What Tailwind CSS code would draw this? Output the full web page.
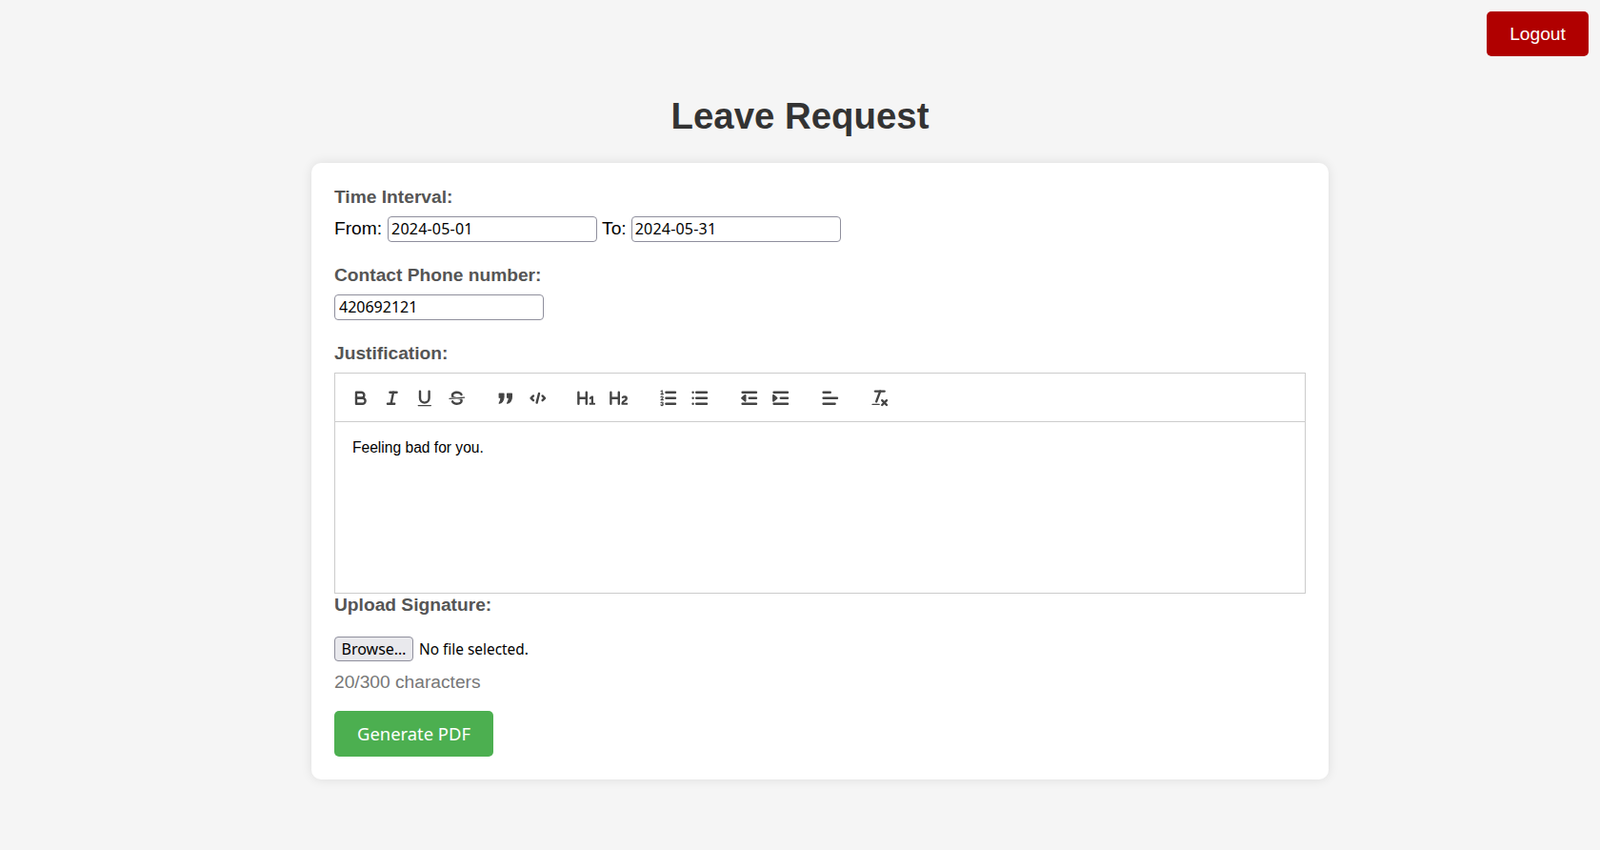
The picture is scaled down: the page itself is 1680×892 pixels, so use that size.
<!DOCTYPE html>
<html lang="en">
<head>
  <meta charset="UTF-8" />
  <title>Leave Request</title>
  <meta name="viewport" content="width=device-width, initial-scale=1.0"/>
  <script src="https://cdn.jsdelivr.net/npm/@tailwindcss/browser@4"></script>
</head>
<body class="h-[892px] overflow-hidden bg-[#f5f5f5] font-['Liberation_Sans',sans-serif] text-[19.2px] text-black">
  <div class="flex justify-end pt-3 pr-3">
    <a href="#" class="flex h-[47px] w-[107px] items-center justify-center rounded-[5px] bg-[#b00000] pt-[2px] text-[19.2px] text-white">Logout</a>
  </div>

  <h1 class="mt-[40px] text-center text-[38.4px] leading-[46px] font-bold text-[#333]">Leave Request</h1>

  <form class="mt-[26px] ml-[327px] h-[647px] w-[1068px] rounded-[10px] bg-white p-6 shadow-[0_0_12px_rgba(0,0,0,0.1)]">
    <label class="mt-[1px] block text-[19.2px] leading-[22px] font-bold text-[#555]">Time Interval:</label>
    <div class="mt-[9px] flex h-[27px] items-center">
      <span>From:</span>
      <input type="text" value="2024-05-01" class="ml-[6px] h-[27px] w-[220px] rounded-[4px] border border-[#8f8f9d] px-[3px] pb-[2px] font-['Noto_Sans',sans-serif] text-[16px] tracking-[0.2px] text-black" />
      <span class="ml-[5px]">To:</span>
      <input type="text" value="2024-05-31" class="ml-[5px] h-[27px] w-[220px] rounded-[4px] border border-[#8f8f9d] px-[3px] pb-[2px] font-['Noto_Sans',sans-serif] text-[16px] tracking-[0.2px] text-black" />
    </div>

    <label class="mt-[24px] block text-[19.2px] leading-[22px] font-bold text-[#555]">Contact Phone number:</label>
    <input type="text" value="420692121" class="mt-[9px] block h-[27px] w-[220px] rounded-[4px] border border-[#8f8f9d] px-[4px] pb-[2px] font-['Noto_Sans',sans-serif] text-[16px] text-black" />

    <label class="mt-[24px] block text-[19.2px] leading-[22px] font-bold text-[#555]">Justification:</label>

    <div class="mt-[9px] flex h-[52px] items-center border border-[#ccc] px-[9.6px] pt-[2px]" id="toolbar">
      <div class="mr-[18px] flex">
        <button type="button" class="h-[28.8px] w-[33.6px] px-[6px] py-[3.6px]"><svg viewBox="0 0 18 18" class="size-[21.6px]" fill="none" stroke="#444" stroke-width="2" stroke-linecap="round" stroke-linejoin="round"><path d="M5,4H9.5A2.5,2.5,0,0,1,12,6.5v0A2.5,2.5,0,0,1,9.5,9H5A0,0,0,0,1,5,9V4A0,0,0,0,1,5,4Z"/><path d="M5,9h5.5A2.5,2.5,0,0,1,13,11.5v0A2.5,2.5,0,0,1,10.5,14H5a0,0,0,0,1,0,0V9A0,0,0,0,1,5,9Z"/></svg></button>
        <button type="button" class="h-[28.8px] w-[33.6px] px-[6px] py-[3.6px]"><svg viewBox="0 0 18 18" class="size-[21.6px]" fill="none" stroke="#444" stroke-width="2" stroke-linecap="round" stroke-linejoin="round"><line x1="7" x2="13" y1="4" y2="4"/><line x1="5" x2="11" y1="14" y2="14"/><line x1="8" x2="10" y1="14" y2="4"/></svg></button>
        <button type="button" class="h-[28.8px] w-[33.6px] px-[6px] py-[3.6px]"><svg viewBox="0 0 18 18" class="size-[21.6px]" fill="none" stroke="#444" stroke-width="2" stroke-linecap="round" stroke-linejoin="round"><path d="M5,3V9a4.012,4.012,0,0,0,4,4H9a4.012,4.012,0,0,0,4-4V3"/><rect fill="#444" stroke="none" height="1" rx=".5" ry=".5" width="12" x="3" y="15"/></svg></button>
        <button type="button" class="ml-[1px] h-[28.8px] w-[33.6px] px-[6px] py-[3.6px]"><svg viewBox="0 0 18 18" class="size-[21.6px]" fill="none"><line stroke="#444" stroke-linecap="round" x1="15.5" x2="2.5" y1="8.5" y2="9.5"/><path fill="#444" d="M9.007,8C6.542,7.791,6,7.519,6,6.5,6,5.792,7.283,5,9,5c1.571,0,2.765.679,2.969,1.309a1,1,0,0,0,1.9-.617C13.356,4.106,11.354,3,9,3,6.2,3,4,4.538,4,6.5a3.2,3.2,0,0,0,.5,1.843Z"/><path fill="#444" d="M8.984,10C11.457,10.208,12,10.479,12,11.5c0,.708-1.283,1.5-3,1.5-1.571,0-2.765-.679-2.969-1.309a1,1,0,1,0-1.9.617C4.644,13.894,6.646,15,9,15c2.8,0,5-1.538,5-3.5a3.2,3.2,0,0,0-.5-1.843Z"/></svg></button>
      </div>
      <div class="-ml-[1px] mr-[18px] flex">
        <button type="button" class="h-[28.8px] w-[33.6px] px-[6px] py-[3.6px]"><svg viewBox="0 0 18 18" class="size-[21.6px]" fill="#444" stroke="#444" stroke-width="1" stroke-linejoin="round"><path d="M3.5,5H7.5V8C7.5,11.5,5.5,13.5,3.5,13.5C4.5,12,5,10.5,5,8.5H3.5Z"/><path d="M10.5,5H14.5V8C14.5,11.5,12.5,13.5,10.5,13.5C11.5,12,12,10.5,12,8.5H10.5Z"/></svg></button>
        <button type="button" class="h-[28.8px] w-[33.6px] px-[6px] py-[3.6px]"><svg viewBox="0 0 18 18" class="size-[21.6px]" fill="none" stroke="#444" stroke-width="2" stroke-linecap="round" stroke-linejoin="round"><polyline points="5 7 3 9 5 11"/><polyline points="13 7 15 9 13 11"/><line x1="10" x2="8" y1="5" y2="13"/></svg></button>
      </div>
      <div class="mr-[18px] flex">
        <button type="button" class="h-[28.8px] w-[33.6px] px-[6px] py-[3.6px]"><svg viewBox="0 0 18 18" class="size-[21.6px]" fill="#444"><path d="M10,4V14a1,1,0,0,1-2,0V10H3v4a1,1,0,0,1-2,0V4A1,1,0,0,1,3,4V8H8V4a1,1,0,0,1,2,0Zm6.06787,9.209H14.98975V7.59863a.54085.54085,0,0,0-.605-.60547h-.62744a1.01119,1.01119,0,0,0-.748.29688L11.645,8.56641a.5435.5435,0,0,0-.022.8584l.28613.30762a.53861.53861,0,0,0,.84717.0332l.09912-.08789a1.2137,1.2137,0,0,0,.2417-.35254h.02246s-.01123.30859-.01123.60547V13.209H12.041a.54085.54085,0,0,0-.605.60547v.43945a.54085.54085,0,0,0,.605.60547h4.02686a.54085.54085,0,0,0,.605-.60547v-.43945A.54085.54085,0,0,0,16.06787,13.209Z"/></svg></button>
        <button type="button" class="h-[28.8px] w-[33.6px] px-[6px] py-[3.6px]"><svg viewBox="0 0 18 18" class="size-[21.6px]" fill="#444"><path d="M16.73975,13.81445v.43945a.54085.54085,0,0,1-.605.60547H11.855a.58392.58392,0,0,1-.64893-.60547V14.0127c0-2.90527,3.39941-3.42187,3.39941-4.55469a.77675.77675,0,0,0-.84717-.78125,1.17684,1.17684,0,0,0-.83594.38477c-.2749.26367-.561.374-.85791.13184l-.4292-.34082c-.30811-.24219-.38525-.51758-.1543-.81445a2.97155,2.97155,0,0,1,2.45361-1.17676,2.45393,2.45393,0,0,1,2.68408,2.40918c0,2.45312-3.1792,2.92676-3.27832,3.93848h2.79443A.54085.54085,0,0,1,16.73975,13.81445ZM9,3A.99974.99974,0,0,0,8,4V8H3V4A1,1,0,0,0,1,4V14a1,1,0,0,0,2,0V10H8v4a1,1,0,0,0,2,0V4A.99974.99974,0,0,0,9,3Z"/></svg></button>
      </div>
      <div class="mr-[18px] flex">
        <button type="button" class="ml-[1px] h-[28.8px] w-[33.6px] px-[6px] py-[3.6px]"><svg viewBox="0 0 18 18" class="size-[21.6px]" fill="none" stroke="#444" stroke-width="2" stroke-linecap="round" stroke-linejoin="round"><line x1="7" x2="15" y1="4" y2="4"/><line x1="7" x2="15" y1="9" y2="9"/><line x1="7" x2="15" y1="14" y2="14"/><line stroke-width="1" x1="2.5" x2="4.5" y1="5.5" y2="5.5"/><path fill="#444" stroke="none" d="M3.5,6A0.5,0.5,0,0,1,3,5.5V3.085l-0.276.138A0.5,0.5,0,0,1,2.053,3c-0.124-.247-0.023-0.324.224-0.447l1-.5A0.5,0.5,0,0,1,4,2.5v3A0.5,0.5,0,0,1,3.5,6Z"/><path stroke-width="1" d="M4.5,10.5h-2c0-.234,1.85-1.076,1.85-2.234A0.959,0.959,0,0,0,2.5,8.156"/><path stroke-width="1" d="M2.5,14.846a0.959,0.959,0,0,0,1.85-.109A0.7,0.7,0,0,0,3.75,14a0.688,0.688,0,0,0,.6-0.736,0.959,0.959,0,0,0-1.85-.109"/></svg></button>
        <button type="button" class="-ml-[1px] h-[28.8px] w-[33.6px] px-[6px] py-[3.6px]"><svg viewBox="0 0 18 18" class="size-[21.6px]" fill="none" stroke="#444" stroke-width="2" stroke-linecap="round" stroke-linejoin="round"><line x1="6" x2="15" y1="4" y2="4"/><line x1="6" x2="15" y1="9" y2="9"/><line x1="6" x2="15" y1="14" y2="14"/><line x1="3" x2="3" y1="4" y2="4"/><line x1="3" x2="3" y1="9" y2="9"/><line x1="3" x2="3" y1="14" y2="14"/></svg></button>
      </div>
      <div class="mr-[18px] flex">
        <button type="button" class="h-[28.8px] w-[33.6px] px-[6px] py-[3.6px]"><svg viewBox="0 0 18 18" class="size-[21.6px]" fill="none" stroke="#444" stroke-width="2" stroke-linecap="round" stroke-linejoin="round"><line x1="3" x2="15" y1="14" y2="14"/><line x1="3" x2="15" y1="4" y2="4"/><line x1="9" x2="15" y1="9" y2="9"/><path fill="#444" stroke-width="1.5" d="M5.5,6.5V11.5L2.5,9Z"/></svg></button>
        <button type="button" class="h-[28.8px] w-[33.6px] px-[6px] py-[3.6px]"><svg viewBox="0 0 18 18" class="size-[21.6px]" fill="none" stroke="#444" stroke-width="2" stroke-linecap="round" stroke-linejoin="round"><line x1="3" x2="15" y1="14" y2="14"/><line x1="3" x2="15" y1="4" y2="4"/><line x1="9" x2="15" y1="9" y2="9"/><path fill="#444" stroke-width="1.5" d="M2.5,6.5V11.5L5.5,9Z"/></svg></button>
      </div>
      <div class="mr-[18px] flex">
        <button type="button" class="h-[28.8px] w-[33.6px] px-[6px] py-[3.6px]"><svg viewBox="0 0 18 18" class="size-[21.6px]" fill="none" stroke="#444" stroke-width="2" stroke-linecap="round" stroke-linejoin="round"><line x1="3" x2="15" y1="9" y2="9"/><line x1="3" x2="13" y1="14" y2="14"/><line x1="3" x2="9" y1="4" y2="4"/></svg></button>
      </div>
      <div class="ml-[1px] flex">
        <button type="button" class="h-[28.8px] w-[33.6px] px-[6px] py-[3.6px]"><svg viewBox="0 0 18 18" class="size-[21.6px]" fill="none" stroke="#444" stroke-width="2" stroke-linecap="round" stroke-linejoin="round"><line x1="5" x2="13" y1="3" y2="3"/><line x1="6" x2="9.35" y1="12" y2="3"/><line x1="11" x2="15" y1="11" y2="15"/><line x1="15" x2="11" y1="11" y2="15"/><rect fill="#444" stroke="none" height="1" rx=".5" ry=".5" width="7" x="2" y="14"/></svg></button>
      </div>
    </div>
    <div class="h-[180px] border border-t-0 border-[#ccc] px-[18px] pt-[16.4px] text-[15.6px] leading-[22px]">
      <p>Feeling bad for you.</p>
    </div>

    <label class="mt-[1px] block text-[19.2px] leading-[22px] font-bold text-[#555]">Upload Signature:</label>
    <div class="mt-[22px] flex h-[26px] items-center font-['Noto_Sans',sans-serif] text-[15.4px]">
      <button type="button" class="h-[26px] w-[83px] rounded-[4px] border border-[#8f8f9d] bg-[#e9e9ed] text-[16px] text-black">Browse…</button>
      <span class="ml-[6px] pt-[1px]">No file selected.</span>
    </div>
    <p class="mt-[11px] text-[19.2px] leading-[22px] text-[#777]">20/300 characters</p>

    <button type="button" class="mt-[19px] h-[48px] w-[167px] rounded-[5px] bg-[#4caf50] font-['Noto_Sans',sans-serif] text-[18.4px] text-white">Generate PDF</button>
  </form>
</body>
</html>
